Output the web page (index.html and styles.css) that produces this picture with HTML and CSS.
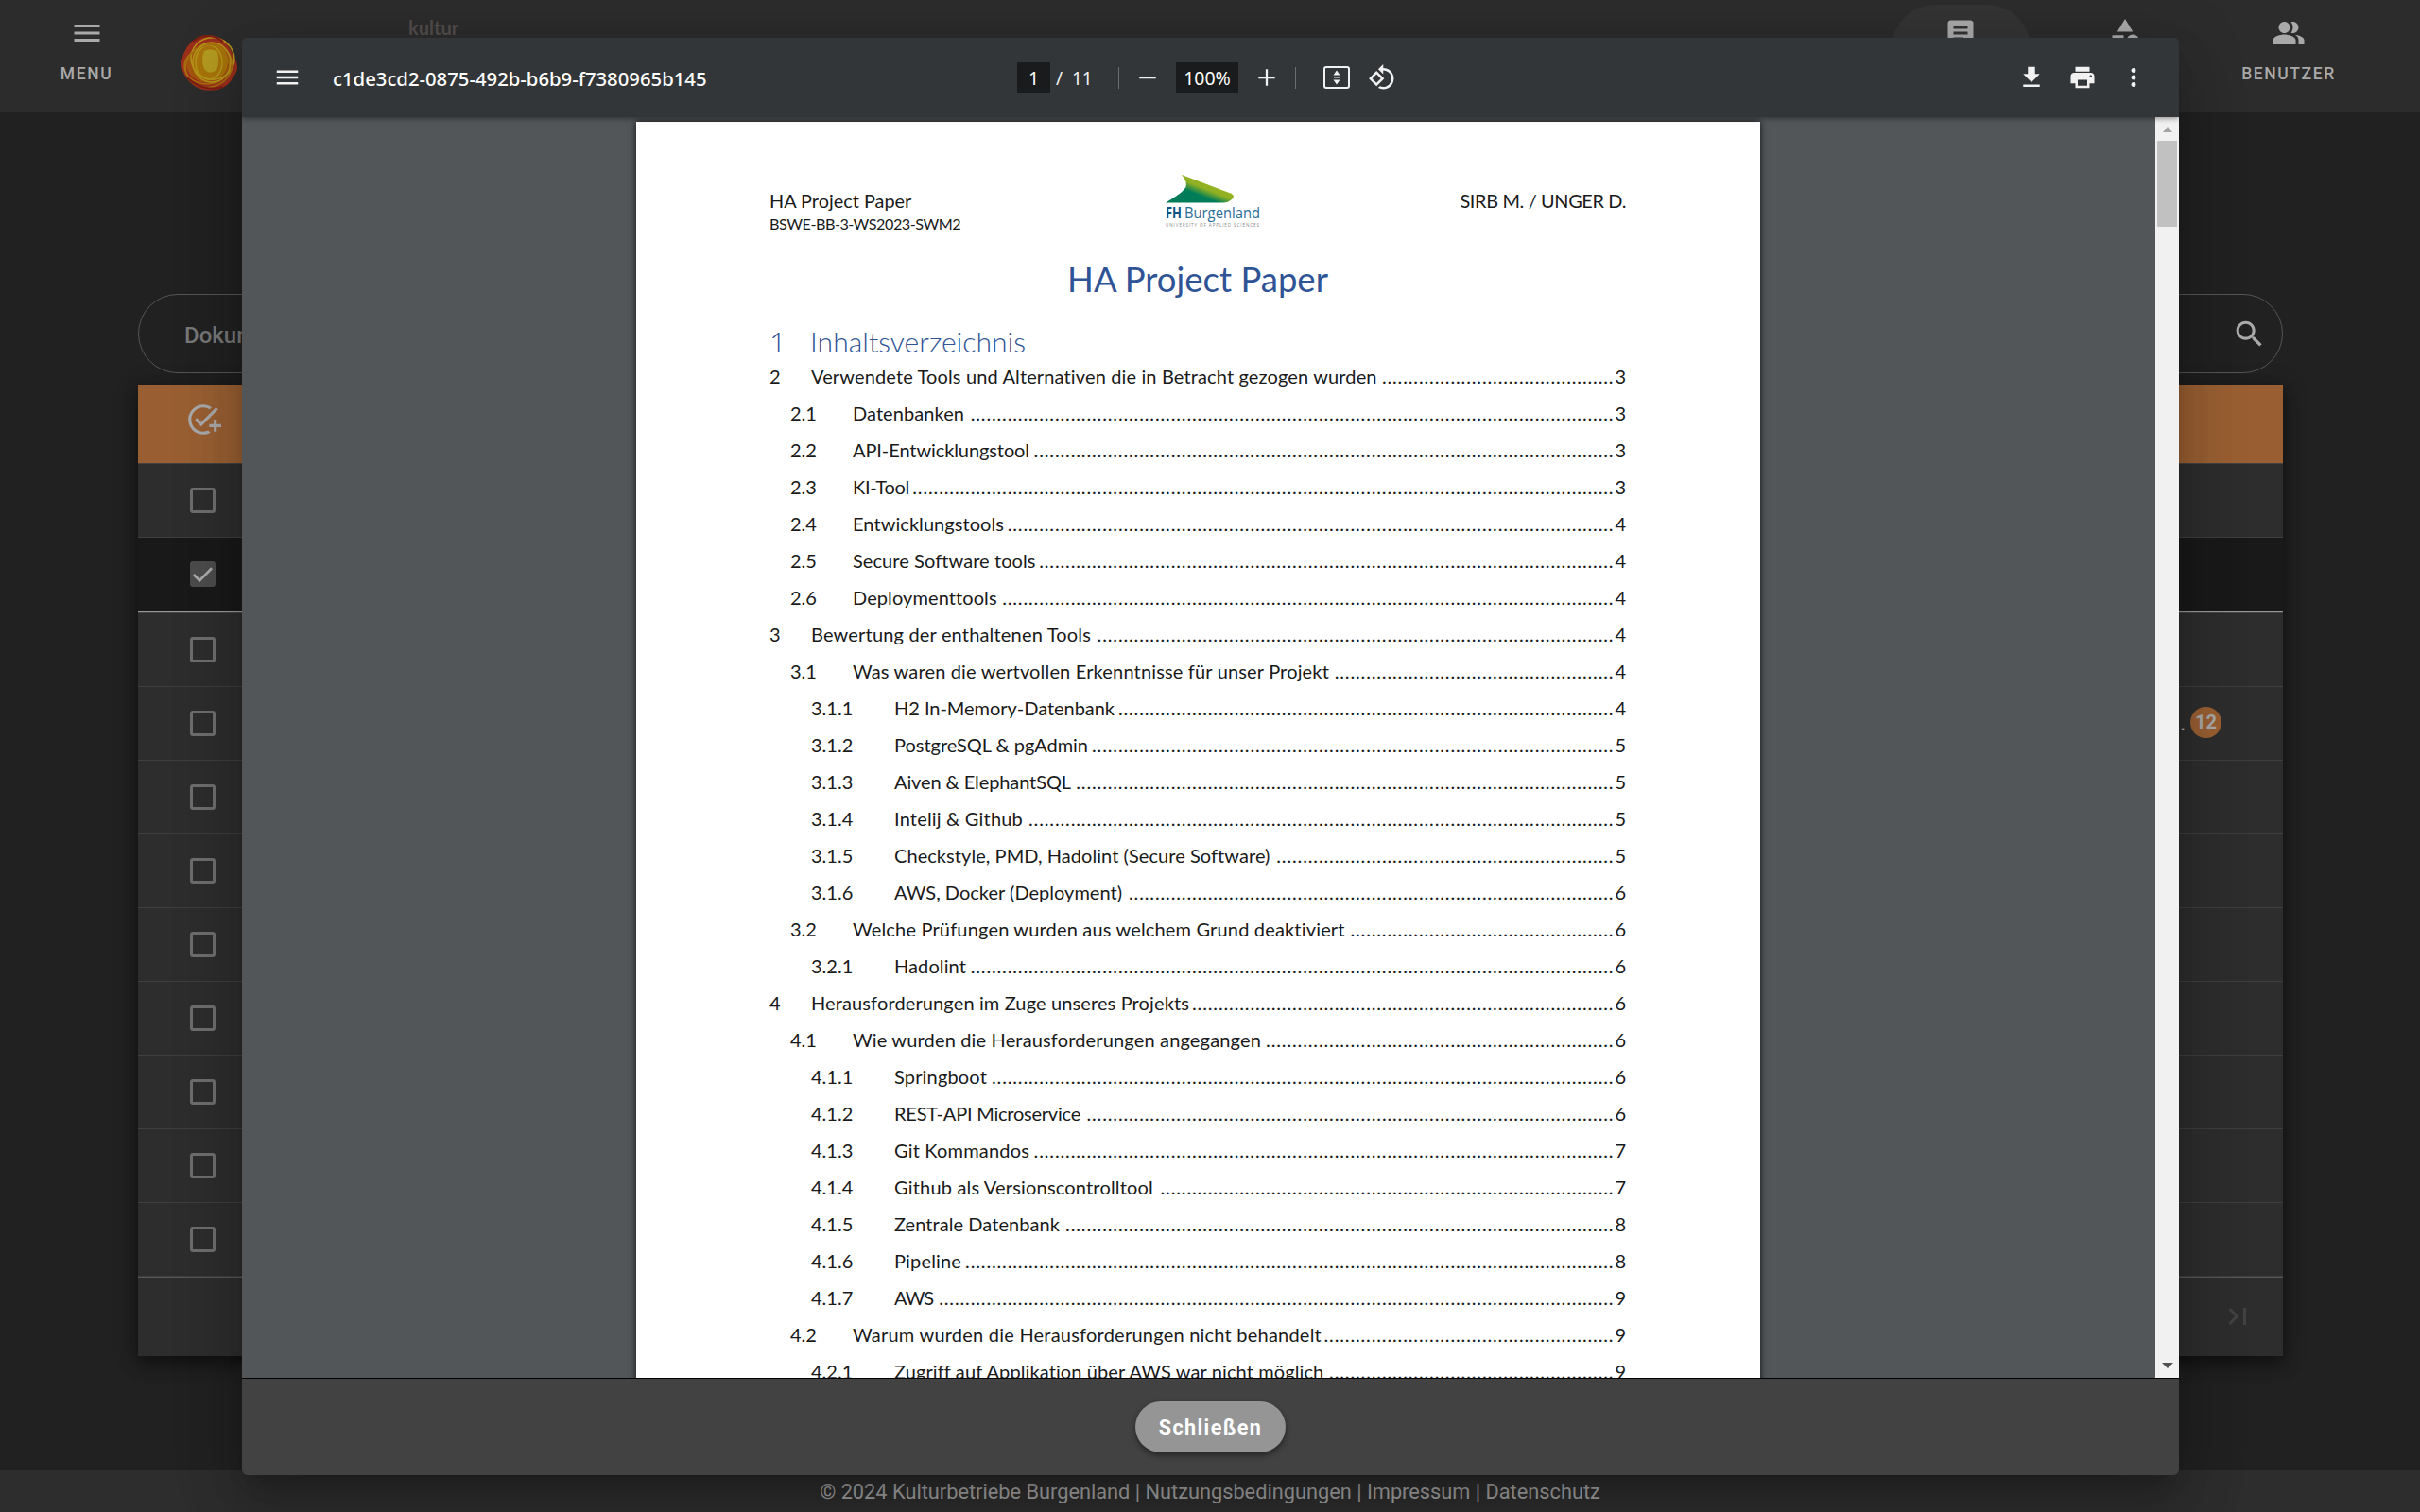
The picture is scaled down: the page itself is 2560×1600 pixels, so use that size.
FILE: index.html
```html
<!DOCTYPE html>
<html lang="de"><head><meta charset="utf-8"><title>Dokumente</title><link rel="stylesheet" href="styles.css"></head>
<body>
<div class="app">
  <header class="topbar">
    <div class="nav-item nav-menu"><svg viewBox="0 0 24 24"><path d="M3 18h18v-2H3v2zm0-5h18v-2H3v2zm0-7v2h18V6H3z"/></svg><span>MENU</span></div>
    <svg class="sun" viewBox="0 0 60 60"><path d="M16 4Q30-3 46 7Q52 16 57 27Q62 37 55 45Q50 56 38 59Q20 62 10 52Q-1 42 0 29Q3 12 16 4z" fill="#9b2f1c"/><ellipse cx="29" cy="31" rx="24" ry="21" fill="#a3550f"/><ellipse cx="31" cy="29" rx="18" ry="20" fill="#a8740a"/><path d="M24 18Q32 14 38 19Q41 30 37 38Q30 44 24 37Q20 27 24 18z" fill="#b39a20"/><g fill="none" stroke="#b5961a" stroke-width="1.500"><ellipse cx="33" cy="26" rx="23" ry="22" transform="rotate(20 33 26)"/><ellipse cx="27" cy="34" rx="24" ry="19" stroke="#a8700f"/><ellipse cx="29" cy="30" rx="14" ry="18"/><ellipse cx="29" cy="34" rx="25" ry="22" stroke="#a8700f" transform="rotate(-20 29 34)"/><ellipse cx="32" cy="30" rx="20" ry="21"/></g><path d="M12 8Q28-4 44 8M6 46Q22 62 44 56" fill="none" stroke="#7a1d12" stroke-width="2"/></svg>
    <span class="brand">kultur</span>
    <span class="spacer"></span>
    <div class="nav-item nav-active"><svg viewBox="0 0 24 24"><path d="M19 3H5c-1.100 0-2 .9-2 2v14c0 1.100.9 2 2 2h14c1.100 0 2-.9 2-2V5c0-1.100-.9-2-2-2zm-5 14H7v-2h7v2zm3-4H7v-2h10v2zm0-4H7V7h10v2z"/></svg></div>
    <div class="nav-item nav-shapes"><svg viewBox="0 0 24 24"><path d="M12 2l-5.500 9h11z"/><circle cx="17.500" cy="17.500" r="4.500"/><path d="M3 13.500h8v8H3z"/></svg></div>
    <div class="nav-item nav-users"><svg viewBox="0 0 24 24"><path d="M16.670 13.130C18.040 14.060 19 15.320 19 17v3h4v-3c0-2.180-3.570-3.470-6.330-3.870zM15 12c2.210 0 4-1.790 4-4s-1.790-4-4-4c-.47 0-.91.1-1.330.24C14.500 5.270 15 6.580 15 8s-.5 2.730-1.330 3.760c.42.140.86.240 1.330.240zM9 12c2.210 0 4-1.790 4-4s-1.790-4-4-4-4 1.790-4 4 1.790 4 4 4zm0 1c-2.670 0-8 1.340-8 4v3h16v-3c0-2.660-5.330-4-8-4z"/></svg><span>BENUTZER</span></div>
  </header>
  <main class="content">
    <div class="search"><span>Dokumente</span><svg viewBox="0 0 24 24"><path d="M15.500 14h-.79l-.28-.27C15.410 12.590 16 11.110 16 9.500 16 5.910 13.090 3 9.500 3S3 5.910 3 9.500 5.910 16 9.500 16c1.610 0 3.090-.59 4.230-1.570l.27.28v.79l5 4.990L20.490 19l-4.990-5zm-6 0C7.010 14 5 11.990 5 9.500S7.010 5 9.500 5 14 7.010 14 9.500 11.990 14 9.500 14z"/></svg></div>
    <div class="table">
      <div class="thead"><svg viewBox="0 0 24 24"><path d="M22 5.180L10.590 16.600l-4.240-4.240 1.410-1.410 2.830 2.830 10-10L22 5.180zM12 20c-4.410 0-8-3.590-8-8s3.590-8 8-8c1.570 0 3.040.460 4.280 1.250l1.450-1.450C16.100 2.670 14.130 2 12 2 6.480 2 2 6.480 2 12s4.480 10 10 10c1.730 0 3.360-.44 4.780-1.220l-1.500-1.500c-1 .46-2.110.72-3.280.72zm7-5h-3v2h3v3h2v-3h3v-2h-3v-3h-2v3z"/></svg></div>
      <div class="trow"><i class="box"></i></div>
      <div class="trow selected"><i class="box checked"><svg viewBox="0 0 24 24"><path d="M3.500 12.500l5.500 5.500L20.500 6.500" fill="none" stroke="#aaa" stroke-width="2.400"/></svg></i></div>
      <div class="trow"><i class="box"></i></div>
      <div class="trow"><i class="box"></i><span class="tail">.</span><span class="count">12</span></div>
      <div class="trow"><i class="box"></i></div>
      <div class="trow"><i class="box"></i></div>
      <div class="trow"><i class="box"></i></div>
      <div class="trow"><i class="box"></i></div>
      <div class="trow"><i class="box"></i></div>
      <div class="trow"><i class="box"></i></div>
      <div class="trow"><i class="box"></i></div>
      <div class="tfoot"><svg viewBox="0 0 24 24"><path d="M5.590 7.410L10.180 12l-4.590 4.590L7 18l6-6-6-6zM16 6h2v12h-2z"/></svg></div>
    </div>
  </main>
  <footer class="legal">© 2024 Kulturbetriebe Burgenland | Nutzungsbedingungen | Impressum | Datenschutz</footer>
</div>
<section class="dialog">
  <div class="toolbar">
    <div class="tools-left"><svg class="ic" viewBox="0 0 24 24"><path d="M3 18h18v-2H3v2zm0-5h18v-2H3v2zm0-7v2h18V6H3z"/></svg><span class="filename">c1de3cd2-0875-492b-b6b9-f7380965b145</span></div>
    <div class="tools-mid">
      <span class="field page-no">1</span><span class="pages">/&nbsp; 11</span><i class="rule"></i>
      <svg class="ic minus" viewBox="0 0 24 24"><path d="M5 11.200h14v1.800H5z"/></svg><span class="field zoom">100%</span><svg class="ic plus" viewBox="0 0 24 24"><path d="M19 12.900h-6.100V19h-1.800v-6.100H5v-1.800h6.100V5h1.800v6.100H19z"/></svg><i class="rule"></i>
      <svg class="ic fit" viewBox="0 0 28 24"><rect x="1" y="1" width="26" height="22" rx="2" fill="none" stroke="#f1f1f1" stroke-width="2"/><path d="M14 4.500l3.500 5h-7zM14 19.500l3.500-5h-7zM11 11.500h6v1h-6z"/></svg>
      <svg class="ic rotate" viewBox="0 0 24 24"><path d="M7.340 6.410L.86 12.900l6.490 6.480 6.490-6.480-6.500-6.490zM3.690 12.900l3.660-3.660L11 12.900l-3.660 3.660-3.650-3.660zm15.670-6.260C17.610 4.880 15.300 4 13 4V.76L8.760 5 13 9.240V6c1.790 0 3.580.68 4.950 2.050 2.730 2.730 2.730 7.170 0 9.900C16.580 19.320 14.790 20 13 20c-.97 0-1.940-.21-2.840-.61l-1.490 1.490C10.020 21.620 11.510 22 13 22c2.300 0 4.610-.88 6.360-2.640 3.520-3.510 3.520-9.210 0-12.720z"/></svg>
    </div>
    <div class="tools-right">
      <svg class="ic" viewBox="0 0 24 24"><path d="M19 9h-4V3H9v6H5l7 7 7-7zM5 18v2h14v-2H5z"/></svg>
      <svg class="ic" viewBox="0 0 24 24"><path d="M19 8H5c-1.660 0-3 1.340-3 3v6h4v4h12v-4h4v-6c0-1.660-1.340-3-3-3zm-3 11H8v-5h8v5zm3-7c-.55 0-1-.45-1-1s.45-1 1-1 1 .45 1 1-.45 1-1 1zm-1-9H6v4h12V3z"/></svg>
      <svg class="ic" viewBox="0 0 24 24"><path d="M12 8c1.100 0 2-.9 2-2s-.9-2-2-2-2 .9-2 2 .9 2 2 2zm0 2c-1.100 0-2 .9-2 2s.9 2 2 2 2-.9 2-2-.9-2-2-2zm0 6c-1.100 0-2 .9-2 2s.9 2 2 2 2-.9 2-2-.9-2-2-2z"/></svg>
    </div>
  </div>
  <div class="viewer">
    <article class="page">
      <div class="page-head">
        <div class="left"><div>HA Project Paper</div><small>BSWE-BB-3-WS2023-SWM2</small></div>
        <svg class="fh" viewBox="0 0 102 64"><defs><linearGradient id="g" gradientUnits="userSpaceOnUse" x1="46" y1="9" x2="38" y2="29"><stop offset="0" stop-color="#98b522"/><stop offset=".35" stop-color="#8fb022"/><stop offset=".75" stop-color="#007d58"/></linearGradient></defs><path d="M17.500.7L71 21Q75 24 71 27Q67 30.500 62 30.500H1Q19 20 22.500 14Q24 7 17.500.7z" fill="url(#g)"/><text x="1" y="47.300" class="fh-b" textLength="17" lengthAdjust="spacingAndGlyphs">FH</text><text x="21" y="47.300" class="fh-n" textLength="80" lengthAdjust="spacingAndGlyphs">Burgenland</text><text x="1" y="56" class="fh-s" textLength="99">UNIVERSITY OF APPLIED SCIENCES</text></svg>
        <div class="right">SIRB M. / UNGER D.</div>
      </div>
      <h1>HA Project Paper</h1>
      <h2><span>1</span>Inhaltsverzeichnis</h2>
      <div class="toc" id="toc"></div>
    </article>
    <div class="scrollbar"><i class="up"></i><i class="thumb"></i><i class="down"></i></div>
  </div>
  <div class="actions"><button class="close">Schließen</button></div>
</section>
<script src="toc.js"></script>
</body></html>
```
FILE: toc.js
```js
// number, title, page, width of the title in the document
const entries = [
  ["2", "Verwendete Tools und Alternativen die in Betracht gezogen wurden", 3, 599],
  ["2.1", "Datenbanken", 3, 118],
  ["2.2", "API-Entwicklungstool", 3, 187],
  ["2.3", "KI-Tool", 3, 60],
  ["2.4", "Entwicklungstools", 4, 160],
  ["2.5", "Secure Software tools", 4, 193],
  ["2.6", "Deploymenttools", 4, 152],
  ["3", "Bewertung der enthaltenen Tools", 4, 296],
  ["3.1", "Was waren die wertvollen Erkenntnisse für unser Projekt", 4, 504],
  ["3.1.1", "H2 In-Memory-Datenbank", 4, 233],
  ["3.1.2", "PostgreSQL & pgAdmin", 5, 205],
  ["3.1.3", "Aiven & ElephantSQL", 5, 187],
  ["3.1.4", "Intelij & Github", 5, 136],
  ["3.1.5", "Checkstyle, PMD, Hadolint (Secure Software)", 5, 397],
  ["3.1.6", "AWS, Docker (Deployment)", 6, 241],
  ["3.2", "Welche Prüfungen wurden aus welchem Grund deaktiviert", 6, 521],
  ["3.2.1", "Hadolint", 6, 76],
  ["4", "Herausforderungen im Zuge unseres Projekts", 6, 400],
  ["4.1", "Wie wurden die Herausforderungen angegangen", 6, 432],
  ["4.1.1", "Springboot", 6, 98],
  ["4.1.2", "REST-API Microservice", 6, 197],
  ["4.1.3", "Git Kommandos", 7, 143],
  ["4.1.4", "Github als Versionscontrolltool", 7, 274],
  ["4.1.5", "Zentrale Datenbank", 8, 175],
  ["4.1.6", "Pipeline", 8, 71],
  ["4.1.7", "AWS", 9, 41],
  ["4.2", "Warum wurden die Herausforderungen nicht behandelt", 9, 496],
  ["4.2.1", "Zugriff auf Applikation über AWS war nicht möglich", 9, 454]
];
const DOT_STEP = 5.58;
const toc = document.getElementById("toc");
for (const [num, title, page, width] of entries) {
  const row = document.createElement("div");
  row.className = "entry level-" + num.split(".").length;
  for (const [cls, text] of [["num", num], ["title", title], ["dots", ""], ["pg", page]]) {
    const s = document.createElement("span");
    s.className = cls;
    s.textContent = text;
    row.append(s);
  }
  toc.append(row);
  const t = row.children[1];
  t.style.letterSpacing = (width - t.getBoundingClientRect().width) / title.length + "px";
  const dots = row.children[2];
  const room = dots.getBoundingClientRect().width;
  const run = document.createElement("span");
  run.textContent = ".".repeat(100);
  dots.append(run);
  run.style.letterSpacing = DOT_STEP - run.getBoundingClientRect().width / 100 + "px";
  run.textContent = ".".repeat(Math.floor((room - 3) / DOT_STEP));
}
```
FILE: styles.css
```css
*{box-sizing:border-box}
body{margin:0;background:#212121;font-family:Roboto,"Liberation Sans",sans-serif;color:#a9a9a9}
svg{display:block;fill:currentColor;flex:none}
.app{width:2560px;height:1600px;display:flex;flex-direction:column;overflow:hidden}
.topbar{height:119px;background:#2c2c2c;display:flex;align-items:flex-start;flex:none}
.nav-item{display:flex;flex-direction:column;align-items:center;font-size:17.500px;font-weight:500;letter-spacing:1.600px;line-height:20px}
.nav-item svg{width:36px;height:36px;margin-top:17px;margin-bottom:15px}
.nav-menu{width:183px}
.sun{width:60px;height:60px;margin:36px 0 0 9px}
.brand{font-family:Lato,sans-serif;font-size:20px;font-weight:700;line-height:24px;color:#524b4b;margin:17px 0 0 180px}
.spacer{flex:1}
.nav-active{width:147px;height:110px;margin-top:5px;margin-right:29px;border-radius:46px;background:#333}
.nav-active svg{margin-top:12px;margin-left:-2px}
.nav-shapes{width:142px}
.nav-users{width:204px;margin-right:37px}
.content{flex:1;padding:192px 145px 0 146px}
.search{height:84px;border:1px solid #555;border-radius:42px;padding:3px 16px 0 48px;display:flex;align-items:center;justify-content:space-between;font-size:24px;font-weight:500;color:#777}
.search svg{width:37px;height:37px;color:#aaa;margin-top:-3px}
.table{margin-top:12px;background:#2d2d2d;box-shadow:0 8px 16px rgba(0,0,0,.38),0 4px 24px rgba(0,0,0,.25)}
.thead{height:84px;background:#995f32;border-bottom:1px solid #434343;padding:18px 0 0 50px}
.thead svg{width:38px;height:38px}
.trow{height:78px;border-bottom:1px solid #3e3e3e;padding-left:55px;display:flex;align-items:center}
.trow.selected{height:80px;background:#191919;border-bottom:1px solid #454545;box-shadow:inset 0 -1px #999;padding-bottom:2px}
.box{width:27px;height:27px;border:3px solid #6e6e6e;border-radius:3px}
.box.checked{background:#4c4c4c;border:0;display:grid;place-items:center}
.box svg{width:27px;height:27px}
.tail{margin-left:auto;font-size:24px;width:11px;margin-top:-2px}
.count{width:33px;height:33px;border-radius:50%;background:#995f32;font-weight:700;font-size:20px;line-height:32px;text-align:center;margin-right:65px;margin-top:-3px}
.tfoot{height:84px;border-top:1px solid #575757;display:flex;align-items:center;justify-content:flex-end;padding:0 30px 2px 0;color:#424242}
.tfoot svg{width:36px;height:36px}
.legal{height:44px;background:#2d2d2d;text-align:center;font-size:21.780px;line-height:46px;color:#a0a0a0}
.dialog{position:absolute;left:256px;top:40px;width:2049px;height:1521px;background:#424242;border-radius:6px;overflow:hidden;display:flex;flex-direction:column;box-shadow:0 16px 22px -10px rgba(0,0,0,.2),0 36px 57px 4px rgba(0,0,0,.14),0 14px 69px 12px rgba(0,0,0,.12)}
.toolbar{height:84px;background:#323639;color:#f1f1f1;display:grid;grid-template-columns:820px 1fr 189px;align-items:center;flex:none;z-index:1;box-shadow:0 2px 5px rgba(0,0,0,.35);font-family:"Noto Sans",sans-serif}
.toolbar>div{display:flex;align-items:center}
.ic{width:30px;height:30px}
.tools-left{padding-left:33px}
.filename{margin-left:33px;margin-top:1px;font-size:20.300px;font-weight:500;color:#fff}
.field{background:#191b1c;height:32px;line-height:33px;text-align:center;font-size:19.500px;color:#fff}
.page-no{width:35px}
.pages{font-size:19px;margin:2px 0 0 6px;width:66px}
.rule{width:1px;height:23px;background:#6b6e70}
.minus{margin:0 15px}.zoom{width:66px}.plus{margin:0 15px}
.fit{width:28px;height:24px;margin:0 19px 0 29px}
.rotate{width:30px}
.tools-right{gap:24px;padding-left:18px}
.viewer{height:1334px;background:#525659;display:flex;overflow:hidden}
.page{width:1189px;height:1684px;margin:5px 418px 0 417px;flex:none;background:#fff;color:#1a1a1a;padding:53px 142px 0 141px;font-family:Lato,sans-serif;box-shadow:0 0 7px rgba(0,0,0,.8)}
.page-head{display:grid;grid-template-columns:418px 102px 1fr;align-items:start;height:88px;font-size:19.900px;line-height:24px}
.left,.right{padding-top:18px}
.right{text-align:right;letter-spacing:-.350px}
.page-head small{display:block;font-size:16.200px;line-height:26px;letter-spacing:-.480px}
.fh{width:102px;height:64px;margin-top:2px}
.fh-b{font:700 15.500px "Open Sans",sans-serif;fill:#0d5382}
.fh-n{font:400 15.500px "Open Sans",sans-serif;fill:#2a6d97}
.fh-s{font:400 4.600px "Open Sans",sans-serif;fill:#888}
h1{margin:0;text-align:center;font-weight:400;font-size:36.500px;line-height:50px;color:#2f5496}
h2{margin:24px 0 0;font-weight:300;font-size:30.100px;line-height:35px;color:#2f5496;display:flex}
h2 span{width:43px}
.entry{height:39px;display:flex;font-size:20px;line-height:39px;white-space:nowrap}
.num{width:44px}.level-2{padding-left:22px}.level-2 .num{width:66px}.level-3{padding-left:44px}.level-3 .num{width:88px}
.dots{flex:1;min-width:0;text-align:right;padding-right:1px}
.scrollbar{width:25px;background:#f1f1f1;display:flex;flex-direction:column;align-items:center}
.up{border:5px solid transparent;border-top:0;border-bottom:6px solid #a3a3a3;margin-top:10px}
.thumb{width:21px;height:91px;background:#c1c1c1;margin-top:9px}
.down{border:6px solid transparent;border-bottom:0;border-top:6px solid #505050;margin-top:auto;margin-bottom:10px}
.actions{flex:1;border-top:1px solid #000;display:flex;justify-content:center;align-items:center}
.close{width:159px;height:54px;border:0;border-radius:27px;background:#959595;color:#fff;font:700 21.500px Roboto,sans-serif;letter-spacing:1.400px;box-shadow:0 3px 6px rgba(0,0,0,.45)}
```
